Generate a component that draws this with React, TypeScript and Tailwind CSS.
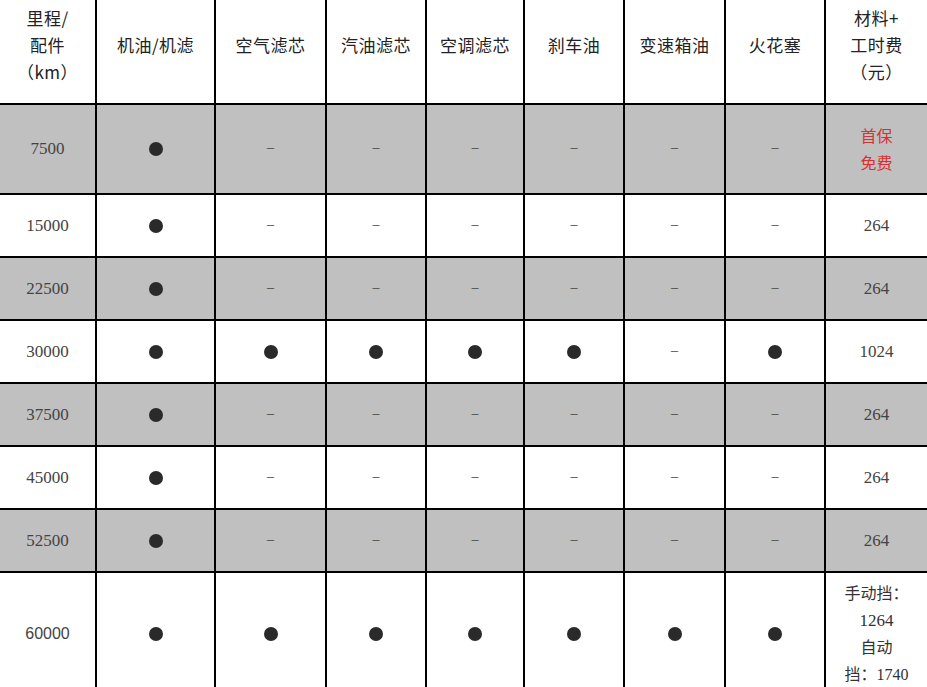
import React from 'react';

type Cell = 'dot' | 'dash';

const headers: string[][] = [
    ['里程/', '配件', '（km）'],
    ['机油/机滤'],
    ['空气滤芯'],
    ['汽油滤芯'],
    ['空调滤芯'],
    ['刹车油'],
    ['变速箱油'],
    ['火花塞'],
    ['材料+', '工时费', '（元）'],
];

const D: Cell = 'dot';
const X: Cell = 'dash';

// mileage rows, gray = shaded background
const rows = [
    { km: '7500', gray: true, h: 'h-[88px]', items: [D, X, X, X, X, X, X], price: ['首保', '免费'], red: true },
    { km: '15000', gray: false, h: 'h-[61px]', items: [D, X, X, X, X, X, X], price: ['264'] },
    { km: '22500', gray: true, h: 'h-[61px]', items: [D, X, X, X, X, X, X], price: ['264'] },
    { km: '30000', gray: false, h: 'h-[61px]', items: [D, D, D, D, D, X, D], price: ['1024'] },
    { km: '37500', gray: true, h: 'h-[61px]', items: [D, X, X, X, X, X, X], price: ['264'] },
    { km: '45000', gray: false, h: 'h-[61px]', items: [D, X, X, X, X, X, X], price: ['264'] },
    { km: '52500', gray: true, h: 'h-[61px]', items: [D, X, X, X, X, X, X], price: ['264'] },
];

const cjk = 'font-["Noto_Sans_CJK_SC",sans-serif]';
const num = 'font-["Liberation_Serif","Noto_Sans_CJK_SC",serif]';

function Mark({ type }: { type: Cell }) {
    if (type === 'dot') {
        return <span className="block w-[14px] h-[14px] rounded-full bg-[#2a2a2a]" />;
    }
    return <span className={`${num} text-[14px] text-[#444] leading-none -mt-[2px]`}>–</span>;
}

export default function App() {
    return (
        <div className="w-[927px] h-[687px] overflow-hidden bg-white">
            <div className="grid grid-cols-[95px_117px_109px_98px_96px_98px_99px_98px_1fr] gap-[2px] bg-black">
                {/* Header */}
                {headers.map((lines, i) => (
                    <div
                        key={i}
                        className={`h-[103px] bg-white flex flex-col items-center justify-center pb-[14px] ${cjk} text-[17px] leading-[27px] text-[#222] tracking-[0.5px]`}
                    >
                        {lines.map((l) => (
                            <span key={l}>{l}</span>
                        ))}
                    </div>
                ))}

                {/* Body rows */}
                {rows.map((r) => {
                    const bg = r.gray ? 'bg-[#c0c0c0]' : 'bg-white';
                    return (
                        <React.Fragment key={r.km}>
                            <div className={`${r.h} ${bg} flex items-center justify-center ${num} text-[17px] text-[#444]`}>
                                {r.km}
                            </div>
                            {r.items.map((it, j) => (
                                <div key={j} className={`${r.h} ${bg} flex items-center justify-center`}>
                                    <Mark type={it} />
                                </div>
                            ))}
                            <div
                                className={`${r.h} ${bg} flex flex-col items-center justify-center leading-[27px] ${
                                    r.red ? `${cjk} text-[16px] text-[#d8302f]` : `${num} text-[17px] text-[#444]`
                                }`}
                            >
                                {r.price.map((p) => (
                                    <span key={p}>{p}</span>
                                ))}
                            </div>
                        </React.Fragment>
                    );
                })}

                {/* Last row */}
                <div className="h-[122px] bg-white flex items-center justify-center font-['Liberation_Sans',sans-serif] text-[16px] text-[#444]">
                    60000
                </div>
                {[D, D, D, D, D, D, D].map((it, j) => (
                    <div key={j} className="h-[122px] bg-white flex items-center justify-center">
                        <Mark type={it} />
                    </div>
                ))}
                <div className={`h-[122px] bg-white flex flex-col items-center justify-center ${num} text-[16px] leading-[27px] text-[#333]`}>
                    <span>手动挡：</span>
                    <span className="text-[17px]">1264</span>
                    <span>自动</span>
                    <span>挡：1740</span>
                </div>
            </div>
        </div>
    );
}
